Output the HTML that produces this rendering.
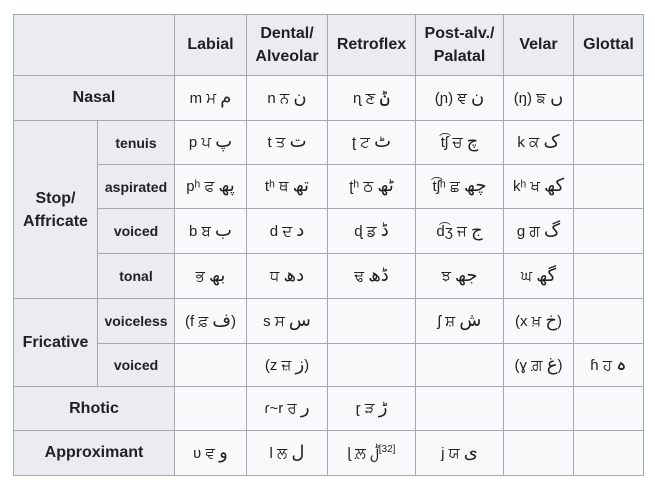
<!DOCTYPE html>
<html><head><meta charset="utf-8"><style>
body{margin:0;background:#fff;font-family:"Liberation Sans","DejaVu Sans",sans-serif;}
table{position:absolute;left:13px;top:14px;border-collapse:collapse;table-layout:fixed;width:630px;background:#f8f9fa;color:#202122;}
td,th{border:1px solid #a2a9b1;text-align:center;padding:0;font-size:15px;white-space:nowrap;overflow:hidden}
th{background:#eaecf0;font-weight:bold;font-size:16px}
th.s{font-size:14px}
sup{font-size:10px}
a{font-size:18px;unicode-bidi:isolate;line-height:14px}
</style></head><body>
<table>
<colgroup><col style="width:84px"><col style="width:77px"><col style="width:72px"><col style="width:81px"><col style="width:88px"><col style="width:88px"><col style="width:70px"><col style="width:70px"></colgroup>
<tr style="height:61px"><th colspan="2"></th><th>Labial</th><th style="line-height:23px">Dental/<br>Alveolar</th><th>Retroflex</th><th style="line-height:23px">Post-alv./<br>Palatal</th><th>Velar</th><th>Glottal</th></tr>
<tr style="height:45px"><th colspan="2">Nasal</th><td>m ਮ <a>م</a></td><td>n ਨ <a>ن</a></td><td>ɳ ਣ <a>ݨ</a></td><td>(ɲ) ਞ <a>ن</a></td><td>(ŋ) ਙ <a>ں</a></td><td></td></tr>
<tr style="height:44px"><th rowspan="4" style="line-height:23px">Stop/<br>Affricate</th><th class="s">tenuis</th><td>p ਪ <a>پ</a></td><td>t ਤ <a>ت</a></td><td>ʈ ਟ <a>ٹ</a></td><td>t͡ʃ ਚ <a>چ</a></td><td>k ਕ <a>ک</a></td><td></td></tr>
<tr style="height:44px"><th class="s">aspirated</th><td>pʰ ਫ <a>پھ</a></td><td>tʰ ਥ <a>تھ</a></td><td>ʈʰ ਠ <a>ٹھ</a></td><td>t͡ʃʰ ਛ <a>چھ</a></td><td>kʰ ਖ <a>کھ</a></td><td></td></tr>
<tr style="height:45px"><th class="s">voiced</th><td>b ਬ <a>ب</a></td><td>d ਦ <a>د</a></td><td>ɖ ਡ <a>ڈ</a></td><td>d͡ʒ ਜ <a>ج</a></td><td>g ਗ <a>گ</a></td><td></td></tr>
<tr style="height:45px"><th class="s">tonal</th><td>ਭ <a>بھ</a></td><td>ਧ <a>دھ</a></td><td>ਢ <a>ڈھ</a></td><td>ਝ <a>جھ</a></td><td>ਘ <a>گھ</a></td><td></td></tr>
<tr style="height:45px"><th rowspan="2">Fricative</th><th class="s">voiceless</th><td>(f ਫ਼ <a>ف</a>)</td><td>s ਸ <a>س</a></td><td></td><td>ʃ ਸ਼ <a>ش</a></td><td>(x ਖ਼ <a>خ</a>)</td><td></td></tr>
<tr style="height:43px"><th class="s">voiced</th><td></td><td>(z ਜ਼ <a>ز</a>)</td><td></td><td></td><td>(ɣ ਗ਼ <a>غ</a>)</td><td>ɦ ਹ <a>ہ</a></td></tr>
<tr style="height:44px"><th colspan="2">Rhotic</th><td></td><td>ɾ~r ਰ <a>ر</a></td><td>ɽ ੜ <a>ڑ</a></td><td></td><td></td><td></td></tr>
<tr style="height:45px"><th colspan="2">Approximant</th><td>ʋ ਵ <a>و</a></td><td>l ਲ <a>ل</a></td><td>ɭ ਲ਼ <a>ࣇ</a><sup>[32]</sup></td><td>j ਯ <a>ی</a></td><td></td><td></td></tr>
</table>
</body></html>
